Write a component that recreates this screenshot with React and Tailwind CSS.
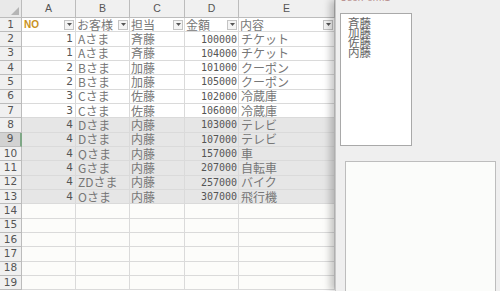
import React from "react";

const rows = [
  [1, "Aさま", "斉藤", "100000", "チケット"],
  [1, "Aさま", "斉藤", "104000", "チケット"],
  [2, "Bさま", "加藤", "101000", "クーポン"],
  [2, "Bさま", "加藤", "105000", "クーポン"],
  [3, "Cさま", "佐藤", "102000", "冷蔵庫"],
  [3, "Cさま", "佐藤", "106000", "冷蔵庫"],
  [4, "Dさま", "内藤", "103000", "テレビ"],
  [4, "Dさま", "内藤", "107000", "テレビ"],
  [4, "Qさま", "内藤", "157000", "車"],
  [4, "Gさま", "内藤", "207000", "自転車"],
  [4, "ZDさま", "内藤", "257000", "バイク"],
  [4, "Oさま", "内藤", "307000", "飛行機"],
];

const cols = ["A", "B", "C", "D", "E"];
const heads = ["NO", "お客様", "担当", "金額", "内容"];

const jp = "font-['Noto_Sans_CJK_JP','Noto_Sans',sans-serif]";

// little filter button in the header row
const FilterBtn = () => (
  <span className="ml-auto mr-[1px] flex h-[10px] w-[10px] shrink-0 items-center justify-center border border-[#c4c4c4] bg-[#f4f4f4]">
    <svg width="5" height="3" viewBox="0 0 5 3">
      <path d="M0 0h5L2.5 3z" fill="#555" />
    </svg>
  </span>
);

const Sheet = () => {
  const cell = "border-r border-b border-[#dadada] overflow-hidden whitespace-nowrap";
  const rowHead =
    "flex items-center justify-center border-b border-[#bcbcbc] font-['DejaVu_Sans',sans-serif] text-[10.5px] text-[#555]";
  return (
    <div className="grid w-[335px] shrink-0 grid-cols-[22px_54px_54px_55px_54px_96px] grid-rows-[18px_repeat(19,14.33px)] bg-white">
      {/* corner */}
      <div className="flex items-end justify-end border-r border-b border-[#bcbcbc] bg-[#e9e9e9] p-[2px]">
        <svg width="8" height="8" viewBox="0 0 8 8">
          <path d="M8 0v8H0z" fill="#b5b5b5" />
        </svg>
      </div>
      {cols.map((c) => (
        <div
          key={c}
          className="flex items-center justify-center border-r border-b border-[#bcbcbc] bg-[#f0f0f0] font-['Liberation_Sans',sans-serif] text-[10.5px] text-[#555]"
        >
          {c}
        </div>
      ))}

      {/* row 1: table headings */}
      <div className={`${rowHead} border-r bg-[#f0f0f0]`}>1</div>
      {heads.map((h, i) => (
        <div key={h} className={`${cell} flex items-center`}>
          <span
            className={
              i === 0
                ? "pl-[2px] font-['Liberation_Sans',sans-serif] text-[10px] font-bold text-[#c9921e]"
                : `pl-[1px] ${jp} text-[12px] leading-none text-[#777]`
            }
          >
            {h}
          </span>
          <FilterBtn />
        </div>
      ))}

      {rows.map((r, idx) => {
        const n = idx + 2;
        const bg = n >= 8 ? "bg-[#e6e6e6]" : "bg-white";
        return (
          <React.Fragment key={n}>
            <div
              className={`${rowHead} ${
                n === 9 ? "border-r-2 border-r-[#7fa886] bg-[#d2d2d2]" : "border-r bg-[#f0f0f0]"
              }`}
            >
              {n}
            </div>
            <div className={`${cell} ${bg} flex items-center justify-end pr-[2px] font-['DejaVu_Sans',sans-serif] text-[10.5px] text-[#555]`}>
              {r[0]}
            </div>
            <div className={`${cell} ${bg} flex items-center pl-[2px] ${jp} text-[12px] text-[#777]`}>{r[1]}</div>
            <div className={`${cell} ${bg} flex items-center pl-[1px] ${jp} text-[12px] text-[#777]`}>{r[2]}</div>
            <div className={`${cell} ${bg} flex items-center justify-end pr-[1px] font-['DejaVu_Sans_Mono',monospace] text-[10px] text-[#555]`}>
              {r[3]}
            </div>
            <div className={`${cell} ${bg} flex items-center pl-[2px] ${jp} text-[12px] text-[#777]`}>{r[4]}</div>
          </React.Fragment>
        );
      })}

      {Array.from({ length: 6 }, (_, k) => k + 14).map((n) => (
        <React.Fragment key={n}>
          <div className={`${rowHead} border-r bg-[#f0f0f0]`}>{n}</div>
          {cols.map((c) => (
            <div key={c} className={`${cell} bg-[#fcfcfa]`} />
          ))}
        </React.Fragment>
      ))}
    </div>
  );
};

const FormPanel = () => (
  <div className="flex h-[291px] flex-1 flex-col overflow-hidden border-l border-[#c8c8c8] bg-[#efefef] shadow-[-5px_0_7px_rgba(0,0,0,0.22)]">
    {/* title of the form, mostly scrolled off the top */}
    <div className="flex h-[3px] shrink-0 items-end overflow-hidden pl-[4px]">
      <span className="shrink-0 font-['Liberation_Sans',sans-serif] text-[10px] leading-[10px] text-[#b89090]">
        UserForm1
      </span>
    </div>
    <div className="ml-[4px] mt-[10px] h-[133px] w-[72px] shrink-0 border border-[#a9a9a9] bg-white pl-[7px] pt-[3px]">
      {["斉藤", "加藤", "佐藤", "内藤"].map((t) => (
        <div key={t} className={`h-[10px] ${jp} text-[11.5px] leading-[10px] text-[#666]`}>
          {t}
        </div>
      ))}
    </div>
    <div className="ml-[9px] mt-[15px] h-[150px] w-[151px] shrink-0 border border-[#bdbdbd] bg-[#fbfcfa]" />
  </div>
);

export default function App() {
  return (
    <div className="flex h-[291px] w-[500px] overflow-hidden bg-white">
      <Sheet />
      <FormPanel />
    </div>
  );
}
